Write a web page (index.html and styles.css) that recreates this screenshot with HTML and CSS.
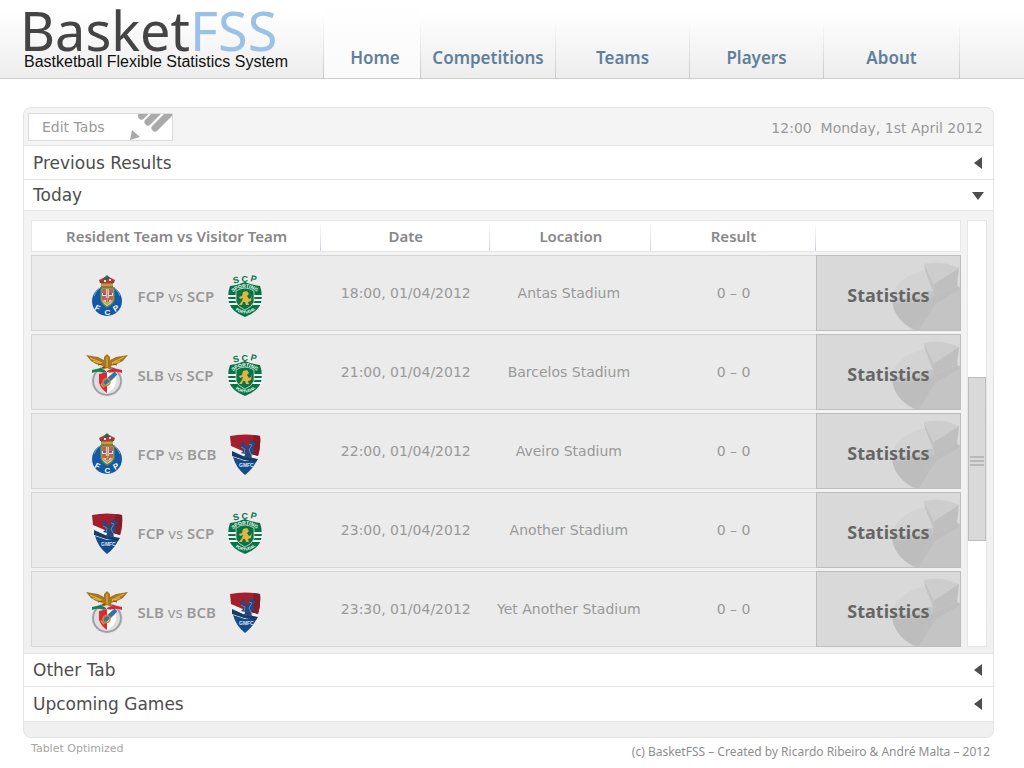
FILE: index.html
```html
<!DOCTYPE html>
<html lang="en">
<head>
<meta charset="utf-8">
<title>BasketFSS</title>
<link rel="stylesheet" href="styles.css">
</head>
<body>
<svg class="sprites" aria-hidden="true">
  <symbol id="fcp" viewBox="0 0 44 44">
    <circle cx="22" cy="27" r="15" fill="#1559a6"/>
    <path d="M9 22Q12 14 18 13M35 22Q32 14 26 13" fill="none" stroke="#6f9fd0" stroke-width="1"/>
    <path d="M15 9L14 6L18 4L22 2L26 4L30 6L29 9Z" fill="#d3273a"/>
    <path d="M18 5L22 1L25 4L22 6ZM15 7H18V9H15ZM26 7H29V9H26Z" fill="#256b43"/>
    <path d="M19 6H21V8H19ZM24 5H26V7H24Z" fill="#f3e5df"/>
    <path d="M16 9H28L28 14H16Z" fill="#a8702e"/>
    <path d="M16 11H28" stroke="#e3c25c" stroke-width="1"/>
    <path d="M16 14H29V26Q28 30 22 33Q17 30 16 26Z" fill="#d9dce9" stroke="#508a48" stroke-width="1.5"/>
    <path d="M17 15H21V19H17ZM24 15H28V19H24ZM17 22H21V26H17ZM24 22H28V26H24Z" fill="#dc5546"/>
    <path d="M18 19H21V21H18ZM24 19H27V21H24ZM21 24H24V28H21Z" fill="#4572ad"/>
    <path d="M22.500 15V31M17 26L22 30L28 26" fill="none" stroke="#d79b3c" stroke-width="1.500"/>
    <text class="crest-bold" x="10" y="37" font-size="8" fill="#fff" transform="rotate(28 13 34)">F</text>
    <text class="crest-bold" x="19.500" y="41" font-size="8" fill="#fff">C</text>
    <text class="crest-bold" x="28" y="37" font-size="8" fill="#fff" transform="rotate(-30 31 34)">P</text>
  </symbol>
  <symbol id="scp" viewBox="0 0 36 44">
    <text class="crest-bold" x="6" y="9" font-size="9" fill="#087347" transform="rotate(-14 9 6)">S</text>
    <text class="crest-bold" x="14.500" y="7.500" font-size="9" fill="#087347">C</text>
    <text class="crest-bold" x="23.500" y="8" font-size="9" fill="#087347" transform="rotate(14 27 5)">P</text>
    <path d="M3 12Q11 11 18 8Q25 11 33 12Q36 20 34 29Q31 38 18 43Q5 38 2 29Q0 20 3 12Z" fill="#087347"/>
    <path d="M1 22H35M1 26H35M2 30H34" stroke="#f2f6f2" stroke-width="1.800"/>
    <path d="M9 17Q18 11 27 17V28Q25 33 18 36Q11 33 9 28Z" fill="#087347" stroke="#d7e3cf" stroke-width=".8"/>
    <path id="sp-arc" d="M5 19Q18 8 31 19" fill="none"/>
    <path id="pt-arc" d="M6 34Q18 45 30 34" fill="none"/>
    <text class="crest-bold" font-size="5" fill="#fff"><textPath href="#sp-arc" startOffset="1">SPORTING</textPath></text>
    <text class="crest-bold" font-size="4" fill="#fff"><textPath href="#pt-arc" startOffset="3">PORTUGAL</textPath></text>
    <path d="M16 18L20 17L22 20L20 22L22 25L24 24L25 21L24 27L21 28L22 31L19 31L18 28L16 28L15 31L12 31L15 27L16 24L13 25L12 23L15 22Z" fill="#e0b542"/>
  </symbol>
  <symbol id="slb" viewBox="0 0 44 44">
    <circle cx="22" cy="28" r="14" fill="#dedede" stroke="#9c9ea3" stroke-width="2"/>
    <circle cx="22" cy="28" r="15" fill="none" stroke="#c9cbd0" stroke-width="1" stroke-dasharray="2 2"/>
    <path d="M7 17L16 15L21 18V21Q14 17 7 20Z" fill="#158154"/>
    <path d="M37 17L28 15L22 18V21Q30 17 37 20Z" fill="#d62736"/>
    <path d="M14 21L22 19L31 21V30Q29 37 22 40Q16 36 14 30Z" fill="#fff"/>
    <path d="M14 21L22 19V40Q16 36 14 30Z" fill="#df2737"/>
    <path d="M17 33L29 22" stroke="#d6a137" stroke-width="5"/>
    <path d="M18 32L31 20" stroke="#2877b9" stroke-width="4"/>
    <circle cx="21.500" cy="29" r="3.500" fill="none" stroke="#ca8b2a" stroke-width="1.500"/>
    <path d="M1 2L13 4L19 7L19 4L22 1L25 4L25 7L31 4L43 2L38 8L32 11L26 13L27 17L22 15L17 17L18 13L11 11L6 8Z" fill="#a97620"/>
    <path d="M5 5L17 10M8 8L17 11M39 4L27 10M35 8L27 11M22 4V14" stroke="#dfb244" stroke-width="1.200"/>
    <path d="M13 12L17 11M28 11L32 12M17 15L20 14" stroke="#654719"/>
  </symbol>
  <symbol id="bcb" viewBox="0 0 36 44">
    <path d="M3 4Q18 1 33 4Q34 15 30 26Q27 36 18 43Q9 36 6 26Q2 15 3 4Z" fill="#f2f1f4"/>
    <path d="M3 4Q18 1 33 4Q34 14 31 24L18 20L4 14Z" fill="#a51e2d"/>
    <path d="M33 4Q34 14 31 24L24 22L27 3Z" fill="#831b29"/>
    <path d="M6 25L18 29L30 28Q26 37 18 43Q9 36 6 25Z" fill="#164b8a"/>
    <path d="M5 19L16 24L31 27L29 30L17 28L5 24Z" fill="#173b69"/>
    <path d="M13 13L16 9L18 13L20 16L22 10L25 8L29 12L26 15L28 20L24 21L25 27L21 25L17 27L18 22L14 21L17 18Z" fill="#26497d"/>
    <path d="M14 15L18 17L17 22M22 12L25 13L22 18L25 24" fill="none" stroke="#7185ab" stroke-width="1"/>
    <text class="crest-bold" x="12" y="35" font-size="5" fill="#dce4f1">GMFC</text>
  </symbol>
  <symbol id="pie" viewBox="0 0 68 74">
    <path d="M32 14Q3 22 0 42L42 38Z" fill="#d3d3d3"/>
    <path d="M0 42Q0 62 22 74L42 44V36Q26 46 0 42Z" fill="#bdbdbd"/>
    <path d="M0 42Q26 44 35 35H42V42Q24 48 1 47Z" fill="#c4c4c4"/>
    <path d="M32 8L42 28V38L33 15Z" fill="#c3c3c3"/>
    <path d="M32 8Q50 4 67 12L42 28Z" fill="#cdcdcd"/>
    <path d="M42 28L67 12L65 30L42 40Z" fill="#bfbfbf"/>
    <path d="M42 40L65 30L68 31V74H23L42 47Z" fill="#c4c4c4"/>
    <path d="M42 40L65 30L68 33L43 48L27 74H22Z" fill="#bebebe"/>
  </symbol>
</svg>

<header class="site-header">
  <div class="brand">
    <h1 class="brand-name">Basket<span class="brand-accent">FSS</span></h1>
    <p class="brand-line">Bastketball Flexible Statistics System</p>
  </div>
  <nav class="main-nav">
    <a class="nav-link nav-current" href="#home">Home</a>
    <a class="nav-link" href="#competitions">Competitions</a>
    <a class="nav-link" href="#teams">Teams</a>
    <a class="nav-link" href="#players">Players</a>
    <a class="nav-link" href="#about">About</a>
  </nav>
</header>

<main class="panel">
  <div class="toolbar">
    <button class="edit-tabs" type="button">Edit Tabs
      <svg class="pencil" viewBox="0 0 44 26" aria-hidden="true">
        <path d="M13.500 2L18-2.500M20 8L32-4M27 14L46-5" fill="none" stroke="#aaa" stroke-width="7" stroke-linecap="round"/>
        <path d="M4 16L2 26L12 23Z" fill="#aaa"/>
      </svg>
    </button>
    <time class="clock" datetime="2012-04-01T12:00">12:00&nbsp; Monday, 1st April 2012</time>
  </div>

  <button class="tab" type="button" aria-expanded="false">Previous Results<svg class="arrow" viewBox="0 0 12 12" aria-hidden="true"><path d="M2 6L10 0V12Z"/></svg></button>
  <button class="tab tab-open" type="button" aria-expanded="true">Today<svg class="arrow" viewBox="0 0 12 12" aria-hidden="true"><path d="M0 3H12L6 11Z"/></svg></button>

  <section class="games">
    <table class="schedule">
      <thead>
        <tr><th class="col-teams">Resident Team vs Visitor Team</th><th class="col-date">Date</th><th class="col-location">Location</th><th class="col-result">Result</th><th class="col-stats" aria-label="Actions"></th></tr>
      </thead>
      <tbody>
        <tr>
          <td><div class="match"><svg class="crest"><use href="#fcp"/></svg><span><b>FCP</b> vs <b>SCP</b></span><svg class="crest crest-away"><use href="#scp"/></svg></div></td>
          <td>18:00, 01/04/2012</td><td class="location">Antas Stadium</td><td>0 – 0</td>
          <td class="action"><button class="stats" type="button"><svg class="pie"><use href="#pie"/></svg><span class="stats-label">Statistics</span></button></td>
        </tr>
        <tr>
          <td><div class="match"><svg class="crest"><use href="#slb"/></svg><span><b>SLB</b> vs <b>SCP</b></span><svg class="crest crest-away"><use href="#scp"/></svg></div></td>
          <td>21:00, 01/04/2012</td><td class="location">Barcelos Stadium</td><td>0 – 0</td>
          <td class="action"><button class="stats" type="button"><svg class="pie"><use href="#pie"/></svg><span class="stats-label">Statistics</span></button></td>
        </tr>
        <tr>
          <td><div class="match"><svg class="crest"><use href="#fcp"/></svg><span><b>FCP</b> vs <b>BCB</b></span><svg class="crest crest-away"><use href="#bcb"/></svg></div></td>
          <td>22:00, 01/04/2012</td><td class="location">Aveiro Stadium</td><td>0 – 0</td>
          <td class="action"><button class="stats" type="button"><svg class="pie"><use href="#pie"/></svg><span class="stats-label">Statistics</span></button></td>
        </tr>
        <tr>
          <td><div class="match"><svg class="crest"><use href="#bcb"/></svg><span><b>FCP</b> vs <b>SCP</b></span><svg class="crest crest-away"><use href="#scp"/></svg></div></td>
          <td>23:00, 01/04/2012</td><td class="location">Another Stadium</td><td>0 – 0</td>
          <td class="action"><button class="stats" type="button"><svg class="pie"><use href="#pie"/></svg><span class="stats-label">Statistics</span></button></td>
        </tr>
        <tr>
          <td><div class="match"><svg class="crest"><use href="#slb"/></svg><span><b>SLB</b> vs <b>BCB</b></span><svg class="crest crest-away"><use href="#bcb"/></svg></div></td>
          <td>23:30, 01/04/2012</td><td class="location">Yet Another Stadium</td><td>0 – 0</td>
          <td class="action"><button class="stats" type="button"><svg class="pie"><use href="#pie"/></svg><span class="stats-label">Statistics</span></button></td>
        </tr>
      </tbody>
    </table>
    <div class="scroll-track">
      <div class="scroll-thumb"><i class="grip"></i><i class="grip"></i><i class="grip"></i></div>
    </div>
  </section>

  <button class="tab tab-lower" type="button" aria-expanded="false">Other Tab<svg class="arrow" viewBox="0 0 12 12" aria-hidden="true"><path d="M2 6L10 0V12Z"/></svg></button>
  <button class="tab tab-last" type="button" aria-expanded="false">Upcoming Games<svg class="arrow" viewBox="0 0 12 12" aria-hidden="true"><path d="M2 6L10 0V12Z"/></svg></button>
  <div class="panel-foot"></div>
</main>

<footer class="site-footer">
  <span>Tablet Optimized</span>
  <span class="credits">(c) BasketFSS – Created by Ricardo Ribeiro &amp; André Malta – 2012</span>
</footer>
</body>
</html>
```
FILE: styles.css
```css
* {
  box-sizing: border-box;
}

body {
  margin: 0;
  background: #fff;
  color: #999;
  font: 14px/20px "DejaVu Sans", sans-serif;
}

button {
  font: inherit;
  color: inherit;
  cursor: pointer;
}

.sprites {
  display: none;
}

.crest-bold {
  font-family: "Liberation Sans", sans-serif;
  font-weight: 700;
}

/* Header */
.site-header {
  display: grid;
  grid-template-columns: 323fr 701fr;
  height: 79px;
  border-bottom: 1px solid #ccc;
  background: linear-gradient(#fff 15%, #eee 95%);
}

.brand {
  padding-left: 20px;
  white-space: nowrap;
}

.brand-name {
  margin: 0;
  color: #444;
  font: 400 54px/60px "Noto Sans", sans-serif;
}

.brand-accent {
  color: #99c2e6;
}

.brand-line {
  margin: -8px 0 0 4px;
  color: #111;
  font: 16px/20px "Liberation Sans", sans-serif;
}

.main-nav {
  display: grid;
  grid-template-columns: 97fr 135fr 134fr 134fr 136fr 64fr;
  border-left: 1px solid;
  border-image: linear-gradient(#fff 20%, #c4c8cc) 1;
}

.nav-link {
  padding-top: 48px;
  border-right: 1px solid;
  border-image: linear-gradient(#fff 25%, #c4c8cc) 1;
  color: #5f809c;
  font: 600 17px/20px "Noto Sans", sans-serif;
  text-align: center;
  text-decoration: none;
}

.nav-current {
  padding-left: 6px;
  background: linear-gradient(#fff, #fafafa);
}

/* Panel */
.panel {
  margin: 28px 30px 0 23px;
  border: 1px solid #e4e4e4;
  border-radius: 8px;
  background: linear-gradient(#f4f4f4, #f0f0f0);
}

.toolbar {
  display: flex;
  align-items: center;
  justify-content: space-between;
  height: 37px;
  padding: 0 10px 0 4px;
}

.edit-tabs {
  display: flex;
  align-items: center;
  justify-content: space-between;
  width: 145px;
  height: 28px;
  padding: 0 0 0 13px;
  border: 1px solid #dcdcdc;
  background: #fff;
}

.pencil {
  width: 44px;
  height: 26px;
}

.clock {
  padding-top: 3px;
}

.tab {
  display: flex;
  align-items: center;
  justify-content: space-between;
  width: 100%;
  height: 34px;
  padding: 0 9px;
  border: 0;
  border-top: 1px solid #e4e4e4;
  background: #fff;
  color: #4d4d4d;
  font-size: 17px;
}

.tab-open {
  height: 32px;
  border-bottom: 1px solid #e4e4e4;
}

.tab-lower {
  height: 33px;
}

.tab-last {
  height: 36px;
  border-bottom: 1px solid #e4e4e4;
}

.arrow {
  width: 12px;
  height: 12px;
  fill: #4d4d4d;
}

.panel-foot {
  height: 15px;
}

/* Schedule */
.games {
  display: flex;
  gap: 6px;
  padding: 6px 6px 3px 7px;
}

.schedule {
  flex: 1;
  table-layout: fixed;
  border-spacing: 0 3px;
  text-align: center;
}

.schedule th {
  height: 32px;
  padding: 0;
  border: 1px solid #e6e6e6;
  border-width: 1px 0;
  background: linear-gradient(#fff, #c9d4de) right / 1px 100% no-repeat #fff;
  color: #888;
  font: 600 15px/20px "Noto Sans", sans-serif;
}

.schedule th:first-child {
  border-left-width: 1px;
}

.schedule th:last-child {
  border-right-width: 1px;
  background: #fff;
}

.col-teams { width: 31.2%; }
.col-date { width: 18.2%; }
.col-location { width: 17.3%; }
.col-result { width: 17.7%; }
.col-stats { width: 15.6%; }

.schedule td {
  height: 76px;
  padding: 0;
  border: 1px solid #d6d6d6;
  border-width: 1px 0;
  background: #ebebeb;
}

.schedule td:first-child {
  border-left-width: 1px;
}

.schedule .location {
  padding-right: 4px;
}

.schedule .action {
  border: 0;
}

.match {
  display: grid;
  grid-template-columns: 44px 80px 36px;
  gap: 9px;
  align-items: center;
  justify-content: center;
  padding: 6px 6px 0 0;
  text-align: left;
  white-space: nowrap;
  font: 15px/20px "Noto Sans", sans-serif;
}

.match b {
  font-weight: 600;
}

.crest {
  width: 44px;
  height: 44px;
}

.crest-away {
  width: 36px;
}

.stats {
  position: relative;
  display: block;
  width: 100%;
  height: 76px;
  padding: 4px 0 0;
  border: 1px solid #bdbdbd;
  background: #d9d9d9;
  color: #666;
  font: 700 18px/24px "Noto Sans", sans-serif;
}

.pie {
  position: absolute;
  right: 0;
  bottom: 0;
  width: 68px;
  height: 74px;
}

.stats-label {
  position: relative;
}

.scroll-track {
  display: grid;
  grid-template-rows: 156fr 164fr 105fr;
  width: 20px;
  margin: 3px 0;
  border: 1px solid #e6e6e6;
  background: #fff;
}

.scroll-thumb {
  display: flex;
  grid-row: 2;
  flex-direction: column;
  gap: 2px;
  align-items: center;
  justify-content: center;
  padding-top: 4px;
  border: 1px solid #bdbdbd;
  background: #d9d9d9;
}

.grip {
  width: 14px;
  height: 2px;
  background: #b8b8b8;
}

/* Footer */
.site-footer {
  display: flex;
  justify-content: space-between;
  padding: 3px 34px 0 31px;
  color: #a5a5a5;
  font-size: 11px;
  line-height: 16px;
}

.credits {
  padding-top: 3px;
  color: #8e8e8e;
  font: 12px/16px "Noto Sans", sans-serif;
}
```
